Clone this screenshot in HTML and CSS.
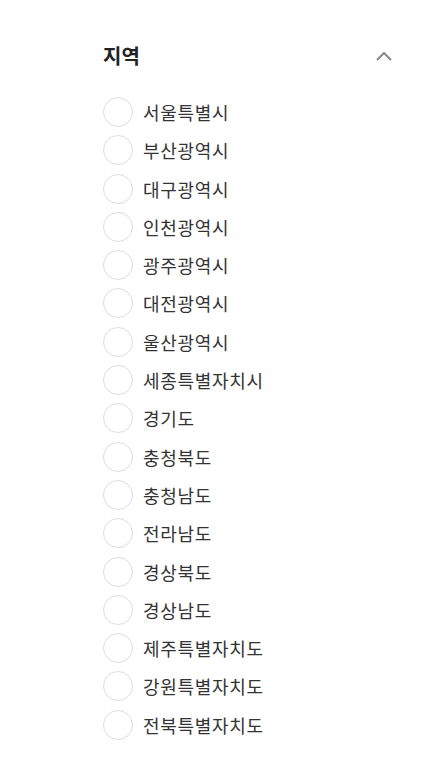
FILE: index.html
```html
<!DOCTYPE html>
<html lang="ko">
<head>
<meta charset="utf-8">
<link rel="stylesheet" href="styles.css">
</head>
<body>
<section class="filter">
  <div class="filter-head">
    <h2 class="filter-title">지역</h2>
    <svg class="chevron" width="18" height="12" viewBox="0 0 18 12"><path d="M2 10 L9 3 L16 10" fill="none" stroke="#8a8a8a" stroke-width="2"/></svg>
  </div>
  <ul class="options">
    <li class="option"><span class="radio"></span><span class="label">서울특별시</span></li>
    <li class="option"><span class="radio"></span><span class="label">부산광역시</span></li>
    <li class="option"><span class="radio"></span><span class="label">대구광역시</span></li>
    <li class="option"><span class="radio"></span><span class="label">인천광역시</span></li>
    <li class="option"><span class="radio"></span><span class="label">광주광역시</span></li>
    <li class="option"><span class="radio"></span><span class="label">대전광역시</span></li>
    <li class="option"><span class="radio"></span><span class="label">울산광역시</span></li>
    <li class="option"><span class="radio"></span><span class="label">세종특별자치시</span></li>
    <li class="option"><span class="radio"></span><span class="label">경기도</span></li>
    <li class="option"><span class="radio"></span><span class="label">충청북도</span></li>
    <li class="option"><span class="radio"></span><span class="label">충청남도</span></li>
    <li class="option"><span class="radio"></span><span class="label">전라남도</span></li>
    <li class="option"><span class="radio"></span><span class="label">경상북도</span></li>
    <li class="option"><span class="radio"></span><span class="label">경상남도</span></li>
    <li class="option"><span class="radio"></span><span class="label">제주특별자치도</span></li>
    <li class="option"><span class="radio"></span><span class="label">강원특별자치도</span></li>
    <li class="option"><span class="radio"></span><span class="label">전북특별자치도</span></li>
  </ul>
</section>
</body>
</html>
```

FILE: styles.css
```css
html, body {
  margin: 0;
  padding: 0;
  background: #fff;
}
body {
  font-family: "Noto Sans CJK KR", "Noto Sans", sans-serif;
  color: #333;
}
.filter {
  width: 290px;
  padding: 40px 0 0 103px;
}
.filter-head {
  display: flex;
  justify-content: space-between;
  align-items: center;
  height: 32px;
}
.filter-title {
  margin: 0;
  font-size: 20px;
  font-weight: 700;
  color: #222;
  line-height: 32px;
}
.chevron {
  display: block;
}
.options {
  list-style: none;
  margin: 25px 0 0;
  padding: 0;
  display: flex;
  flex-direction: column;
  gap: 8.3px;
}
.option {
  display: flex;
  align-items: center;
  gap: 10px;
  height: 30px;
}
.radio {
  width: 28px;
  height: 28px;
  border: 1px solid #dcdcdc;
  border-radius: 50%;
  flex: none;
}
.label {
  font-size: 18px;
  letter-spacing: 0.7px;
  line-height: 30px;
  color: #333;
}
```
